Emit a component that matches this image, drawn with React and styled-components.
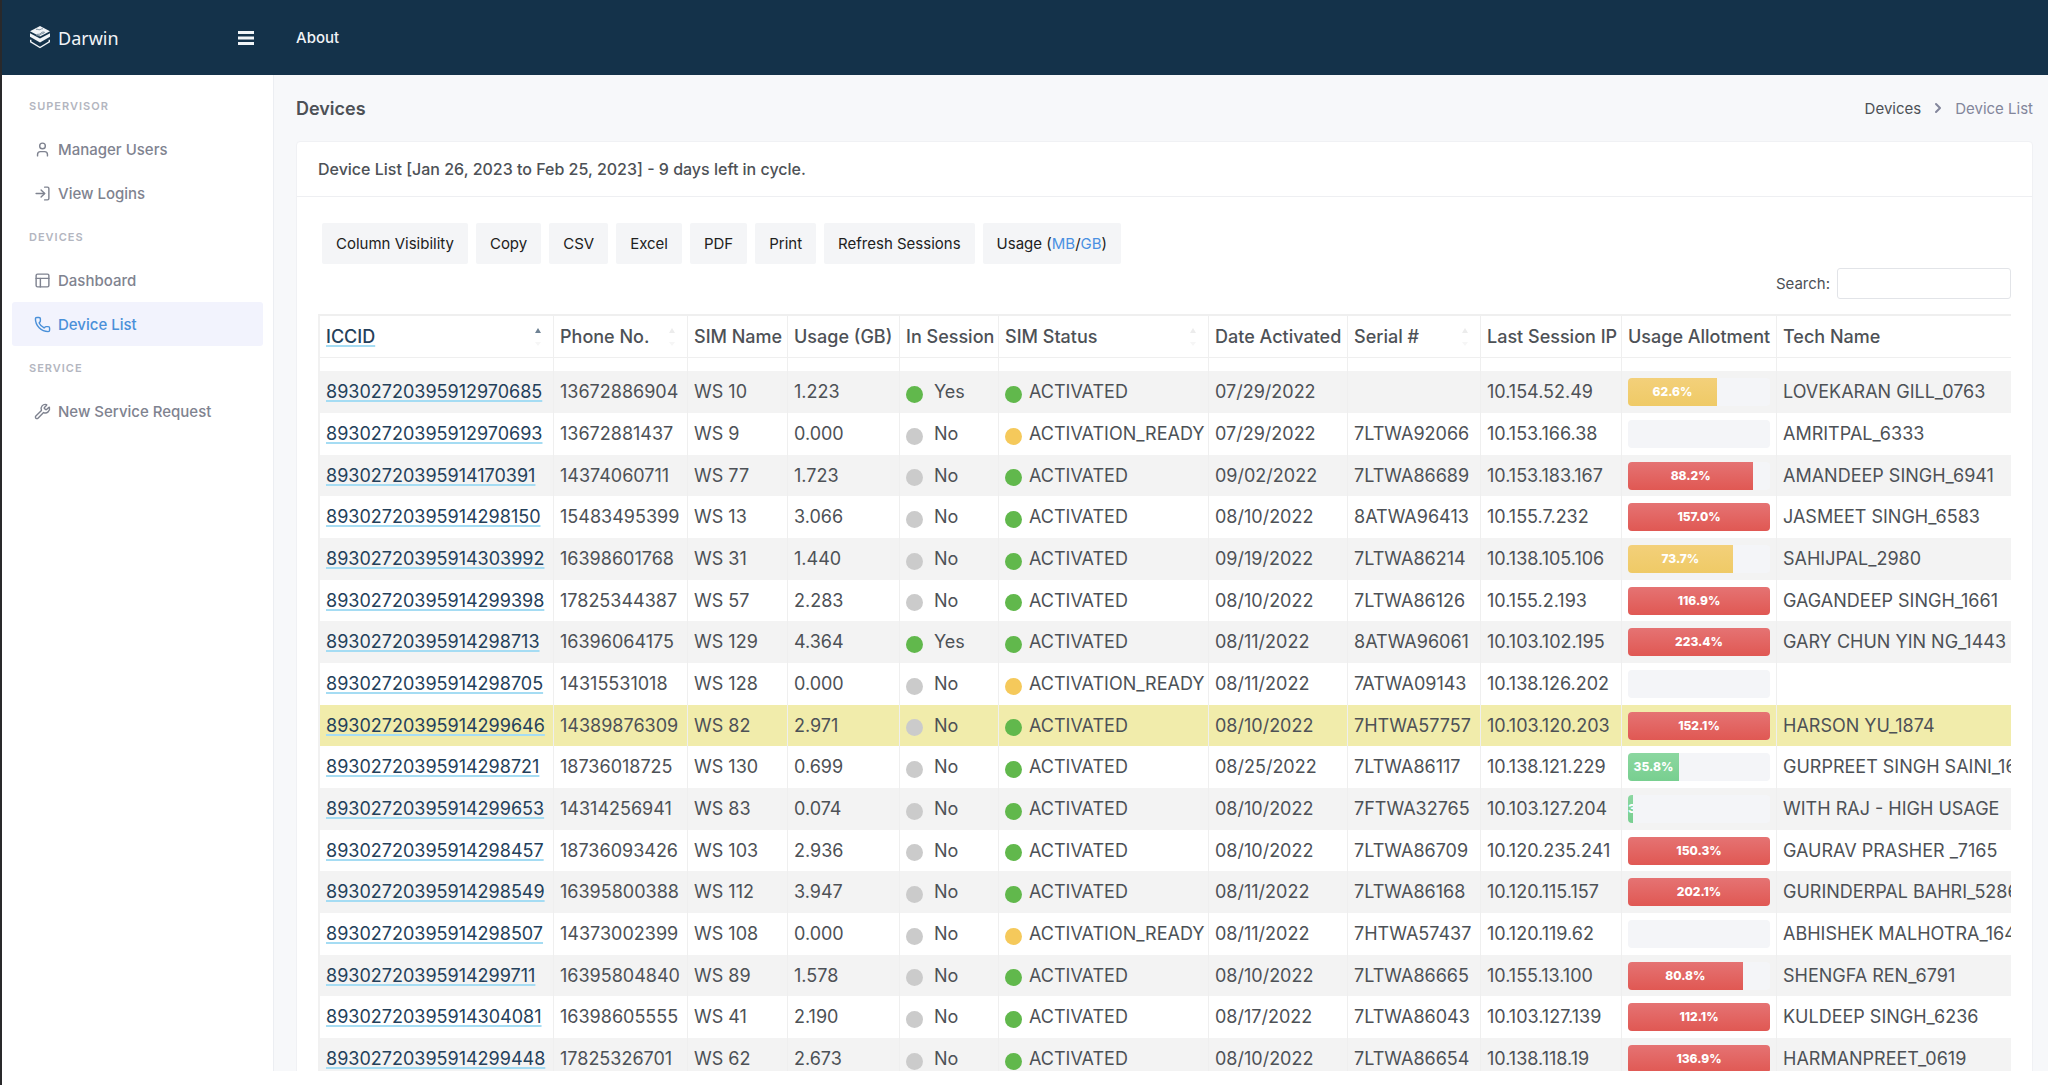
import React from "react";
import styled, { createGlobalStyle } from "styled-components";
import { User, LogIn, Phone, Wrench, PanelsTopLeft, ChevronRight } from "lucide-react";

const Global = createGlobalStyle`
  *, *::before, *::after { box-sizing: border-box; }
  body { margin: 0; background: #fff; color: #4d5156; font-family: Inter, "Liberation Sans", sans-serif; font-size: 15px; }
`;

const Window = styled.div`
  border-left: 2px solid #29292b;
  min-height: 100vh;
`;

const TopBar = styled.header`
  display: flex;
  align-items: center;
  height: 75px;
  background: #14324a;
  color: #f1f4f7;
`;

const Brand = styled.div`
  display: flex;
  align-items: center;
  justify-content: space-between;
  width: 272px;
  padding: 0 20px 0 28px;
`;

const BrandLink = styled.a`
  display: flex;
  align-items: center;
  gap: 8px;
  color: inherit;
  text-decoration: none;
  font: 400 18px/24px "Noto Sans", sans-serif;
`;

const IconButton = styled.button`
  display: flex;
  padding: 0;
  border: 0;
  background: none;
  color: inherit;
`;

const TopLink = styled.a`
  margin-left: 22px;
  color: inherit;
  text-decoration: none;
  font-size: 15px;
  font-weight: 500;
`;

const Body = styled.div`
  display: flex;
  height: calc(100vh - 89px);
  overflow: hidden;
`;

const Sidebar = styled.nav`
  flex: 0 0 272px;
  padding: 20px 10px 0;
  border-right: 1px solid #eceef2;
`;

const NavHeading = styled.h2`
  margin: 0;
  padding: 0 17px;
  color: #b3b6c0;
  font-size: 11px;
  font-weight: 600;
  line-height: 22px;
  letter-spacing: 1px;
  text-transform: uppercase;
`;

const NavList = styled.ul`
  margin: 0;
  padding: 10px 0 11px;
  list-style: none;
`;

const NavLink = styled.a`
  display: flex;
  align-items: center;
  gap: 7px;
  height: 44px;
  padding: 0 22px;
  border-radius: 3px;
  background: ${(p) => (p.$active ? "#f2f3fd" : "transparent")};
  color: ${(p) => (p.$active ? "#4a90d9" : "#7f8390")};
  font-size: 15px;
  font-weight: 500;
  text-decoration: none;
`;

const Main = styled.main`
  flex: 1;
  min-width: 0;
  padding: 0 15px 0 22px;
  background: #f7f8fa;
`;

const PageHead = styled.div`
  display: flex;
  align-items: center;
  justify-content: space-between;
  height: 66px;
`;

const PageTitle = styled.h1`
  margin: 0;
  font-size: 18px;
  font-weight: 600;
`;

const Crumbs = styled.nav`
  display: flex;
  align-items: center;
  gap: 9px;
  color: #83869b;
  a { color: #4d5156; text-decoration: none; }
`;

const Card = styled.section`
  background: #fff;
  border: 1px solid #f0f1f4;
  border-radius: 4px;
`;

const CardTitle = styled.h2`
  margin: 0;
  padding: 0 21px;
  border-bottom: 1px solid #eeeff2;
  font-size: 16px;
  font-weight: 500;
  line-height: 54px;
`;

const CardBody = styled.div`
  padding: 26px 21px 0;
`;

const Tools = styled.div`
  display: flex;
  gap: 8px;
  padding-left: 4px;
`;

const ToolButton = styled.button`
  height: 41px;
  padding: 0 14px;
  border: 0;
  border-radius: 2px;
  background: #f4f5f7;
  color: #212121;
  font: 400 15px/20px Inter, sans-serif;
`;

const Unit = styled.span`
  color: #4a90e2;
`;

const SearchRow = styled.div`
  display: flex;
  align-items: center;
  justify-content: flex-end;
  gap: 7px;
  padding: 4px 0 15px;
`;

const SearchInput = styled.input`
  width: 174px;
  height: 31px;
  border: 1px solid #e2e4e8;
  border-radius: 3px;
  background: #fff;
  font: inherit;
`;

const Table = styled.table`
  width: 100%;
  table-layout: fixed;
  border-collapse: separate;
  border-spacing: 0;
  border-top: 2px solid #efefef;
  border-left: 2px solid #f1f1f1;
  font-size: 18px;
  line-height: 24px;
`;

const Head = styled.th`
  height: ${(p) => (p.$spacer ? 13 : 42)}px;
  padding: 0 6px;
  border-bottom: ${(p) => (p.$spacer ? 0 : 1)}px solid #efefef;
  border-right: 1px solid #efefef;
  font-weight: 500;
  text-align: left;
  white-space: nowrap;
  &:last-child { border-right: 0; }
`;

const HeadInner = styled.div`
  display: flex;
  justify-content: space-between;
  align-items: center;
`;

const SortMark = styled.span`
  display: flex;
  flex-direction: column;
  gap: 9px;
  margin-right: 6px;
  &::before { content: ""; border: 3px solid transparent; border-top: 0; border-bottom: 5px solid ${(p) => (p.$on ? "#6f8294" : "#ececec")}; }
  &::after { content: ""; border: 3px solid transparent; border-bottom: 0; border-top: 4px solid #f6f6f6; }
`;

const IccLink = styled.a`
  color: #24405a;
  text-decoration: underline #a5dcf3 2px;
  text-underline-offset: 2px;
  text-decoration-skip-ink: none;
`;

const Row = styled.tr`
  height: 42px;
  background: ${(p) => (p.$marked ? "#f1ecab" : "#fff")};
  &:nth-child(odd) { background: ${(p) => (p.$marked ? "#f1ecab" : "#f3f3f3")}; }
  &:nth-child(3n) { height: 41px; }
`;

const Cell = styled.td`
  padding: 0 6px;
  border-right: 1px solid #efefef;
  overflow: hidden;
  white-space: nowrap;
  &:last-child { border-right: 0; }
`;

const State = styled.span`
  display: flex;
  align-items: center;
  gap: ${(p) => p.$gap}px;
`;

const Dot = styled.span`
  flex: none;
  width: 17px;
  height: 17px;
  margin-top: 4px;
  border-radius: 50%;
  background: ${(p) => ({ green: "#61b84c", grey: "#cbcbcb", amber: "#f5c95b" })[p.$tone]};
`;

const Track = styled.div`
  height: 28px;
  border-radius: 4px;
  background: #f4f5f8;
  overflow: hidden;
`;

const Bar = styled.div`
  height: 100%;
  overflow: hidden;
  background: ${(p) => ({ red: "linear-gradient(#e57373, #e05853)", amber: "linear-gradient(#f3d07a, #efca66)", green: "linear-gradient(#8bd7a0, #78cf90)" })[p.$tone]};
  color: #fff;
  font-size: 12px;
  font-weight: 800;
  line-height: 28px;
  text-align: center;
`;

const COLS = [
  ["ICCID", 234], ["Phone No.", 134], ["SIM Name", 100], ["Usage (GB)", 112], ["In Session", 99], ["SIM Status", 210],
  ["Date Activated", 139], ["Serial #", 133], ["Last Session IP", 141], ["Usage Allotment", 155], ["Tech Name", null],
];
const SORT = { "ICCID": 1, "Phone No.": 1, "SIM Status": 1, "Serial #": 1 };

const ROWS = [
  ["89302720395912970685", "13672886904", "WS 10", "1.223", "Yes", "ACTIVATED", "07/29/2022", "", "10.154.52.49", 62.6, "LOVEKARAN GILL_0763"],
  ["89302720395912970693", "13672881437", "WS 9", "0.000", "No", "ACTIVATION_READY", "07/29/2022", "7LTWA92066", "10.153.166.38", 0, "AMRITPAL_6333"],
  ["89302720395914170391", "14374060711", "WS 77", "1.723", "No", "ACTIVATED", "09/02/2022", "7LTWA86689", "10.153.183.167", 88.2, "AMANDEEP SINGH_6941"],
  ["89302720395914298150", "15483495399", "WS 13", "3.066", "No", "ACTIVATED", "08/10/2022", "8ATWA96413", "10.155.7.232", 157.0, "JASMEET SINGH_6583"],
  ["89302720395914303992", "16398601768", "WS 31", "1.440", "No", "ACTIVATED", "09/19/2022", "7LTWA86214", "10.138.105.106", 73.7, "SAHIJPAL_2980"],
  ["89302720395914299398", "17825344387", "WS 57", "2.283", "No", "ACTIVATED", "08/10/2022", "7LTWA86126", "10.155.2.193", 116.9, "GAGANDEEP SINGH_1661"],
  ["89302720395914298713", "16396064175", "WS 129", "4.364", "Yes", "ACTIVATED", "08/11/2022", "8ATWA96061", "10.103.102.195", 223.4, "GARY CHUN YIN NG_1443"],
  ["89302720395914298705", "14315531018", "WS 128", "0.000", "No", "ACTIVATION_READY", "08/11/2022", "7ATWA09143", "10.138.126.202", 0, ""],
  ["89302720395914299646", "14389876309", "WS 82", "2.971", "No", "ACTIVATED", "08/10/2022", "7HTWA57757", "10.103.120.203", 152.1, "HARSON YU_1874"],
  ["89302720395914298721", "18736018725", "WS 130", "0.699", "No", "ACTIVATED", "08/25/2022", "7LTWA86117", "10.138.121.229", 35.8, "GURPREET SINGH SAINI_16"],
  ["89302720395914299653", "14314256941", "WS 83", "0.074", "No", "ACTIVATED", "08/10/2022", "7FTWA32765", "10.103.127.204", 3.8, "WITH RAJ - HIGH USAGE"],
  ["89302720395914298457", "18736093426", "WS 103", "2.936", "No", "ACTIVATED", "08/10/2022", "7LTWA86709", "10.120.235.241", 150.3, "GAURAV PRASHER _7165"],
  ["89302720395914298549", "16395800388", "WS 112", "3.947", "No", "ACTIVATED", "08/11/2022", "7LTWA86168", "10.120.115.157", 202.1, "GURINDERPAL BAHRI_5286"],
  ["89302720395914298507", "14373002399", "WS 108", "0.000", "No", "ACTIVATION_READY", "08/11/2022", "7HTWA57437", "10.120.119.62", 0, "ABHISHEK MALHOTRA_164"],
  ["89302720395914299711", "16395804840", "WS 89", "1.578", "No", "ACTIVATED", "08/10/2022", "7LTWA86665", "10.155.13.100", 80.8, "SHENGFA REN_6791"],
  ["89302720395914304081", "16398605555", "WS 41", "2.190", "No", "ACTIVATED", "08/17/2022", "7LTWA86043", "10.103.127.139", 112.1, "KULDEEP SINGH_6236"],
  ["89302720395914299448", "17825326701", "WS 62", "2.673", "No", "ACTIVATED", "08/10/2022", "7LTWA86654", "10.138.118.19", 136.9, "HARMANPREET_0619"],
];

const NAV = [
  ["Supervisor", [["Manager Users", User], ["View Logins", LogIn]]],
  ["Devices", [["Dashboard", PanelsTopLeft], ["Device List", Phone, true]]],
  ["Service", [["New Service Request", Wrench]]],
];

function Logo() {
  return (
    <svg width="20" height="23" viewBox="0 0 20 23" fill="none" aria-hidden="true">
      <path d="M10 0 20 5.300 10 10.600 0 5.300Z" fill="#f1f4f7" />
      <path d="M0 7.200 10 12.500l10-5.300v3.600L10 16.500 0 10.800Z" fill="#f1f4f7" />
      <path d="M0 13.200 10 19l10-5.800v3L10 22.500 0 16.200Z" fill="#14324a" />
      <path d="M.7 13.800v2L10 21.500l9.300-5.700v-2" stroke="#f1f4f7" strokeWidth="1.400" />
      <path d="M6 3.400c1.500-.8 2.600.9 4 .3s1.600-1.300 3-.9M6.500 9.300c0-1.800 2.600-.4 3.700-1.500s1.800-2.200 4.300-1.600c-.6 1.700-2.600 1-3.600 2s-2.300 2.400-4.400 1.100Z" stroke="#6f8394" strokeWidth=".9" />
    </svg>
  );
}

function Bars() {
  return (
    <svg width="16" height="14" viewBox="0 0 16 14" fill="currentColor" aria-hidden="true">
      <path d="M0 0h16v3H0zM0 5.500h16v3H0zM0 11h16v3H0z" />
    </svg>
  );
}

function Allotment({ value }) {
  const tone = value < 50 ? "green" : value < 80 ? "amber" : "red";
  return (
    <Track>
      {value > 0 && (
        <Bar $tone={tone} style={{ width: `${Math.min(value, 100)}%` }}>{value.toFixed(1)}%</Bar>
      )}
    </Track>
  );
}

export default function App() {
  return (
    <Window>
      <Global />
      <TopBar>
        <Brand>
          <BrandLink href="#"><Logo />Darwin</BrandLink>
          <IconButton aria-label="Toggle menu"><Bars /></IconButton>
        </Brand>
        <TopLink href="#about">About</TopLink>
      </TopBar>
      <Body>
        <Sidebar>
          {NAV.map(([title, items]) => (
            <React.Fragment key={title}>
              <NavHeading>{title}</NavHeading>
              <NavList>
                {items.map(([label, Icon, active]) => (
                  <li key={label}>
                    <NavLink href="#" $active={active}><Icon size={17} strokeWidth={2} />{label}</NavLink>
                  </li>
                ))}
              </NavList>
            </React.Fragment>
          ))}
        </Sidebar>
        <Main>
          <PageHead>
            <PageTitle>Devices</PageTitle>
            <Crumbs aria-label="Breadcrumb"><a href="#">Devices</a><ChevronRight size={16} strokeWidth={3} /><span>Device List</span></Crumbs>
          </PageHead>
          <Card>
            <CardTitle>Device List [Jan 26, 2023 to Feb 25, 2023] - 9 days left in cycle.</CardTitle>
            <CardBody>
              <Tools>
                {["Column Visibility", "Copy", "CSV", "Excel", "PDF", "Print", "Refresh Sessions"].map((t) => (
                  <ToolButton key={t}>{t}</ToolButton>
                ))}
                <ToolButton>Usage (<Unit>MB</Unit>/<Unit>GB</Unit>)</ToolButton>
              </Tools>
              <SearchRow>
                <label htmlFor="search">Search:</label>
                <SearchInput id="search" type="search" />
              </SearchRow>
              <Table>
                <colgroup>
                  {COLS.map(([name, w]) => <col key={name} width={w || undefined} />)}
                </colgroup>
                <thead>
                  <tr>
                    {COLS.map(([name], i) => (
                      <Head key={name} scope="col">
                        <HeadInner>
                          {i === 0 ? <IccLink href="#">{name}</IccLink> : name}
                          {SORT[name] && <SortMark $on={i === 0} />}
                        </HeadInner>
                      </Head>
                    ))}
                  </tr>
                  <tr>{COLS.map(([name]) => <Head as="td" key={name} $spacer />)}</tr>
                </thead>
                <tbody>
                  {ROWS.map((r) => (
                    <Row key={r[0]} $marked={r[2] === "WS 82"}>
                      <Cell><IccLink href="#">{r[0]}</IccLink></Cell>
                      <Cell>{r[1]}</Cell>
                      <Cell>{r[2]}</Cell>
                      <Cell>{r[3]}</Cell>
                      <Cell><State $gap={11}><Dot $tone={r[4] === "Yes" ? "green" : "grey"} />{r[4]}</State></Cell>
                      <Cell><State $gap={7}><Dot $tone={r[5] === "ACTIVATED" ? "green" : "amber"} />{r[5]}</State></Cell>
                      <Cell>{r[6]}</Cell>
                      <Cell>{r[7]}</Cell>
                      <Cell>{r[8]}</Cell>
                      <Cell><Allotment value={r[9]} /></Cell>
                      <Cell>{r[10]}</Cell>
                    </Row>
                  ))}
                </tbody>
              </Table>
            </CardBody>
          </Card>
        </Main>
      </Body>
    </Window>
  );
}
